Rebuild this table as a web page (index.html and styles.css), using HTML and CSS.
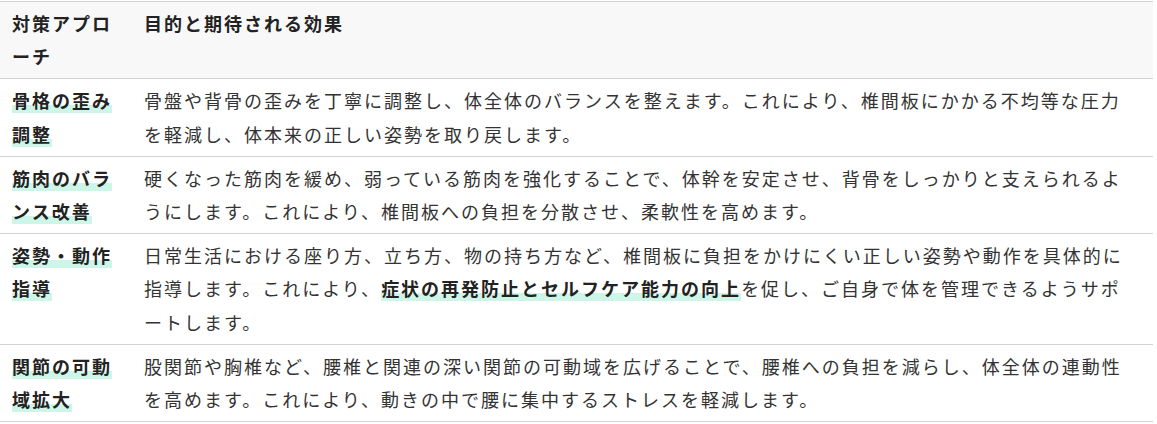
FILE: index.html
```html
<!DOCTYPE html>
<html lang="ja">
<head>
<meta charset="utf-8">
<title>対策アプローチ</title>
<link rel="stylesheet" href="styles.css">
</head>
<body>
<table class="approach">
  <colgroup>
    <col class="col-name">
    <col class="col-desc">
  </colgroup>
  <thead>
    <tr>
      <th>対策アプローチ</th>
      <th class="desc">目的と期待される効果</th>
    </tr>
  </thead>
  <tbody>
    <tr>
      <td><strong class="mark">骨格の歪み調整</strong></td>
      <td class="desc">骨盤や背骨の歪みを丁寧に調整し、体全体のバランスを整えます。これにより、椎間板にかかる不均等な圧力を軽減し、体本来の正しい姿勢を取り戻します。</td>
    </tr>
    <tr>
      <td><strong class="mark">筋肉のバランス改善</strong></td>
      <td class="desc">硬くなった筋肉を緩め、弱っている筋肉を強化することで、体幹を安定させ、背骨をしっかりと支えられるようにします。これにより、椎間板への負担を分散させ、柔軟性を高めます。</td>
    </tr>
    <tr>
      <td><strong class="mark">姿勢・動作指導</strong></td>
      <td class="desc">日常生活における座り方、立ち方、物の持ち方など、椎間板に負担をかけにくい正しい姿勢や動作を具体的に指導します。これにより、<strong class="mark">症状の再発防止とセルフケア能力の向上</strong>を促し、ご自身で体を管理できるようサポートします。</td>
    </tr>
    <tr>
      <td><strong class="mark">関節の可動域拡大</strong></td>
      <td class="desc">股関節や胸椎など、腰椎と関連の深い関節の可動域を広げることで、腰椎への負担を減らし、体全体の連動性を高めます。これにより、動きの中で腰に集中するストレスを軽減します。</td>
    </tr>
  </tbody>
</table>
</body>
</html>
```

FILE: styles.css
```css
html, body {
  margin: 0;
  padding: 0;
  background: #ffffff;
}

body {
  padding-top: 1px;
  font-family: "Noto Sans CJK JP", "Noto Sans", sans-serif;
  font-size: 18px;
  line-height: 33.2px;
  letter-spacing: 2px;
  color: #333333;
}

.approach {
  width: 1153px;
  border-collapse: collapse;
  table-layout: fixed;
}

.col-name {
  width: 132px;
}

.approach th,
.approach td {
  padding: 5px 12px;
  text-align: left;
  vertical-align: top;
  border-top: 1px solid #d2d2d2;
  border-bottom: 1px solid #d2d2d2;
}

.approach .desc {
  padding-right: 24px;
}

.approach th {
  background: #f8f8f8;
  font-weight: 700;
  color: #222222;
}

.approach td strong {
  font-weight: 700;
  color: #222222;
}

.mark {
  background: linear-gradient(transparent 69%, #cdf6e8 69%);
}
```
